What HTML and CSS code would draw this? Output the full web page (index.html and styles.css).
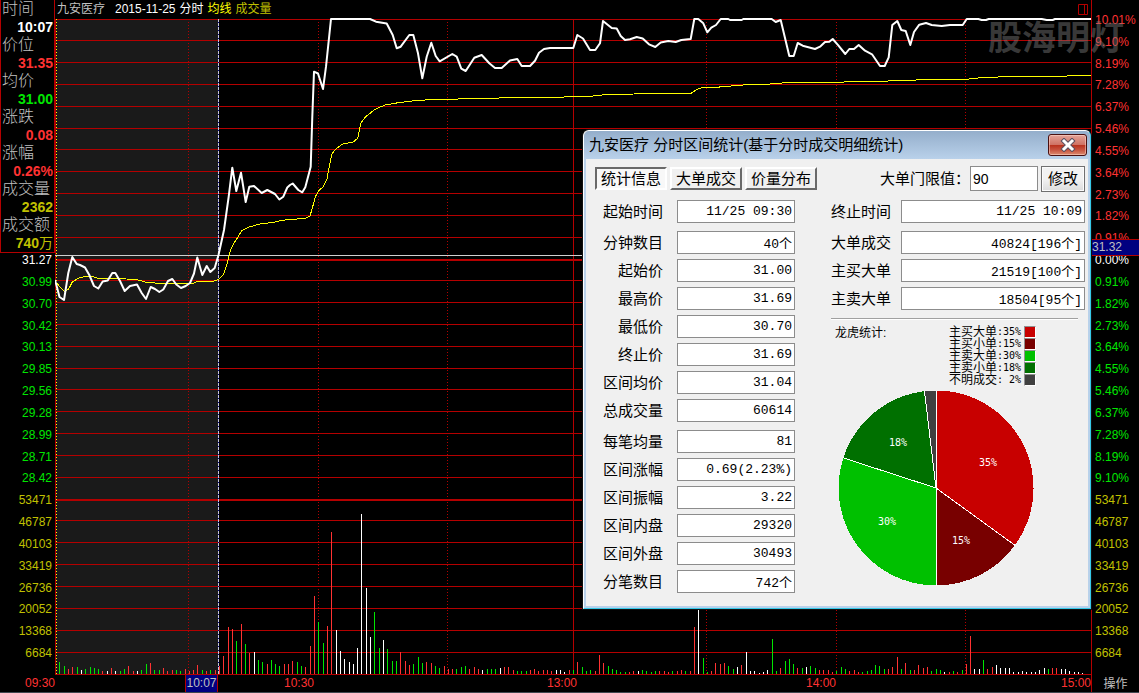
FILE: index.html
```html
<!DOCTYPE html>
<html lang="zh-CN">
<head>
<meta charset="utf-8">
<title>九安医疗 分时</title>
<link rel="stylesheet" href="styles.css">
</head>
<body>
<main class="workspace">
  <aside class="left-column">
    <dl class="quote">
      <dt>时间</dt><dd class="white">10:07</dd>
      <dt>价位</dt><dd class="red">31.35</dd>
      <dt>均价</dt><dd class="green">31.00</dd>
      <dt>涨跌</dt><dd class="red">0.08</dd>
      <dt>涨幅</dt><dd class="red">0.26%</dd>
      <dt>成交量</dt><dd class="yellow">2362</dd>
      <dt>成交额</dt><dd class="yellow">740<span class="unit">万</span></dd>
    </dl>
    <div class="axis axis-left">
      <span class="white">31.27</span>
      <span class="green">30.99</span><span class="green">30.70</span><span class="green">30.42</span><span class="green">30.13</span><span class="green">29.85</span><span class="green">29.56</span><span class="green">29.28</span><span class="green">28.99</span><span class="green">28.71</span><span class="green">28.42</span>
      <span class="yellow">53471</span><span class="yellow">46787</span><span class="yellow">40103</span><span class="yellow">33419</span><span class="yellow">26736</span><span class="yellow">20052</span><span class="yellow">13368</span><span class="yellow">6684</span>
    </div>
  </aside>

  <section class="chart">
    <header class="chart-header">
      <span class="stock">九安医疗</span>
      <span class="white">2015-11-25</span>
      <span class="white">分时</span>
      <span class="bright">均线</span>
      <span class="yellow">成交量</span>
      <svg class="pane-icon" width="10" height="11" viewBox="0 0 10 11"><path d="M.5 .5h9v10h-9zM6.5 .5v10"/></svg>
    </header>
    <svg class="plot" viewBox="55 18 1036 657" preserveAspectRatio="none">
      <rect class="shade" x="56" y="20" width="162" height="654"/>
      <path class="grid" d="M55 19.5H1091M55 40.5H1091M55 62.5H1091M55 84.5H1091M55 106.5H1091M55 128.5H1091M55 149.5H1091M55 171.5H1091M55 193.5H1091M55 215.5H1091M55 237.5H1091M55 280.5H1091M55 302.5H1091M55 324.5H1091M55 346.5H1091M55 368.5H1091M55 389.5H1091M55 411.5H1091M55 433.5H1091M55 455.5H1091M55 477.5H1091M55 520.5H1091M55 542.5H1091M55 564.5H1091M55 586.5H1091M55 608.5H1091M55 630.5H1091M55 652.5H1091M55 674.5H1091M573.5 19V674M55.5 19V674"/>
      <path class="grid thick" d="M55 260H1091M55 500H1091"/>
      <path class="grid dots" d="M188.5 22V674M318.5 22V674M447.5 22V674M706.5 22V674M836.5 22V674M965.5 22V674"/>
      <path class="range-start" d="M56.5 19V674"/>
      <path class="bar-red" d="M68.5 674v-5M72.5 674v-7M102.5 674v-3M111.5 674v-6M128.5 674v-8M133.5 674v-3M150.5 674v-11M163.5 674v-6M167.5 674v-3M172.5 674v-4M185.5 674v-5M189.5 674v-3M193.5 674v-4M197.5 674v-9M206.5 674v-3M215.5 674v-4M219.5 674v-8M223.5 674v-18M228.5 674v-47M232.5 674v-45M241.5 674v-50M249.5 674v-21M267.5 674v-10M284.5 674v-10M288.5 674v-10M292.5 674v-13M305.5 674v-7M310.5 674v-28M314.5 674v-78M327.5 674v-48M331.5 674v-142M400.5 674v-22M405.5 674v-13M409.5 674v-9M426.5 674v-12M431.5 674v-11M444.5 674v-8M448.5 674v-5M452.5 674v-5M469.5 674v-5M474.5 674v-7M478.5 674v-5M504.5 674v-7M508.5 674v-7M513.5 674v-4M530.5 674v-4M534.5 674v-5M538.5 674v-3M543.5 674v-4M547.5 674v-4M551.5 674v-3M569.5 674v-4M577.5 674v-12M595.5 674v-3M599.5 674v-19M603.5 674v-11M629.5 674v-2M633.5 674v-3M659.5 674v-3M664.5 674v-3M668.5 674v-2M677.5 674v-3M681.5 674v-4M690.5 674v-3M694.5 674v-47M711.5 674v-3M715.5 674v-11M720.5 674v-10M724.5 674v-11M741.5 674v-9M780.5 674v-6M797.5 674v-6M819.5 674v-4M823.5 674v-4M828.5 674v-4M832.5 674v-2M849.5 674v-3M854.5 674v-4M858.5 674v-2M888.5 674v-5M892.5 674v-7M897.5 674v-17M905.5 674v-11M914.5 674v-4M918.5 674v-9M923.5 674v-6M927.5 674v-7M949.5 674v-2M957.5 674v-2M966.5 674v-10M970.5 674v-38M987.5 674v-5M992.5 674v-7M1052.5 674v-6M1056.5 674v-6"/>
      <path class="bar-green" d="M59.5 674v-12M64.5 674v-8M77.5 674v-7M85.5 674v-5M90.5 674v-7M94.5 674v-6M98.5 674v-5M120.5 674v-3M124.5 674v-5M141.5 674v-4M146.5 674v-10M154.5 674v-4M159.5 674v-4M176.5 674v-4M180.5 674v-3M202.5 674v-4M210.5 674v-4M236.5 674v-33M245.5 674v-30M258.5 674v-14M262.5 674v-12M271.5 674v-14M275.5 674v-10M279.5 674v-8M297.5 674v-12M301.5 674v-8M318.5 674v-52M323.5 674v-31M374.5 674v-62M379.5 674v-26M387.5 674v-25M392.5 674v-13M396.5 674v-13M413.5 674v-10M418.5 674v-17M422.5 674v-11M435.5 674v-8M439.5 674v-6M456.5 674v-5M461.5 674v-7M465.5 674v-8M487.5 674v-5M491.5 674v-5M495.5 674v-5M517.5 674v-3M521.5 674v-3M526.5 674v-3M573.5 674v-4M582.5 674v-7M586.5 674v-3M590.5 674v-4M608.5 674v-8M612.5 674v-5M616.5 674v-4M620.5 674v-2M625.5 674v-2M642.5 674v-4M646.5 674v-3M651.5 674v-2M655.5 674v-3M672.5 674v-3M685.5 674v-3M703.5 674v-16M707.5 674v-2M728.5 674v-8M733.5 674v-5M772.5 674v-35M776.5 674v-3M785.5 674v-13M789.5 674v-15M793.5 674v-10M802.5 674v-6M810.5 674v-8M815.5 674v-6M836.5 674v-3M841.5 674v-7M845.5 674v-5M862.5 674v-2M867.5 674v-3M871.5 674v-4M875.5 674v-9M879.5 674v-8M884.5 674v-5M901.5 674v-5M910.5 674v-4M931.5 674v-3M936.5 674v-5M940.5 674v-4M953.5 674v-3M962.5 674v-4M983.5 674v-14M1048.5 674v-5"/>
      <path class="bar-white" d="M81.5 674v-4M107.5 674v-3M115.5 674v-3M137.5 674v-3M254.5 674v-22M336.5 674v-44M340.5 674v-23M344.5 674v-15M349.5 674v-12M353.5 674v-10M357.5 674v-26M361.5 674v-160M366.5 674v-86M370.5 674v-37M383.5 674v-34M482.5 674v-4M500.5 674v-6M556.5 674v-4M560.5 674v-4M564.5 674v-2M638.5 674v-3M698.5 674v-64M737.5 674v-7M746.5 674v-22M750.5 674v-3M754.5 674v-3M759.5 674v-1M763.5 674v-2M767.5 674v-4M806.5 674v-7M944.5 674v-2M974.5 674v-5M979.5 674v-5M996.5 674v-9M1000.5 674v-6M1005.5 674v-6M1009.5 674v-6M1013.5 674v-2M1018.5 674v-2M1022.5 674v-3M1026.5 674v-2M1031.5 674v-2M1035.5 674v-2M1039.5 674v-4M1044.5 674v-6M1061.5 674v-5M1065.5 674v-5M1069.5 674v-3M1074.5 674v-2M1078.5 674v-2M1082.5 674v-1"/>
      <path class="range-end-base" d="M218.5 19V674"/>
      <path class="range-end" d="M218.5 19V674"/>
      <path class="cross" d="M55 255.5H1091"/>
      <polyline class="average" points="57,283 59.5,286.5 64.7,291.5 68.7,289 72.3,282 79,278 85,276.5 92.3,276.5 98.3,278.5 120,278.7 136.7,279.5 146.7,282.5 162.3,283.5 193.3,283.5 196.7,281.8 212.3,281.7 218.3,279.5 223.3,275 227.7,261.7 230,252 232.3,246 237.7,237.3 241.7,230.7 248.3,227.3 258.3,224.3 273.3,222.3 282.7,220.3 290,219.5 305,218.5 310,216 312.7,206.7 315.3,196.7 319.3,190 322.7,187.3 327,178.7 329.3,166.7 331.7,154.3 336,148.7 342.7,144 353.3,142 357.7,138.3 360.7,123.3 365,117.3 375,109.3 385,105 398.3,102.7 416.7,100.5 433.3,99.5 463,98.9 506.7,97.8 556.7,97.2 590,96.3 601.7,95 640,93.8 690.7,93.5 696.7,89.5 701.7,87.6 717.3,87.2 743.3,85 770,84 787.3,82.6 838.3,82.1 880,81.4 895,80.7 925,79.7 966.7,79.3 981.7,77.6 1003.3,76.8 1058.3,76.2 1091,75.5"/>
      <polyline class="price" points="55,280 57.7,290 59.5,297 64,300 68.3,273 72.3,257 76.7,264 80,265 85,267.5 89.3,275 94,286 98.3,288.5 102.7,281.5 107.7,280.5 112.3,273 115.3,273 120,281 124.7,291 130,286 137,284.5 141.7,293 146,299 150.7,287 155,289 159.3,292 163.3,289.5 168,281 172.3,279 176.3,284.5 181,288 185.7,286 190,283 194,273.5 197.3,257.5 202.3,275 206.7,266 210.3,272 214.7,268 218.5,255 224,230 228.7,196.7 232.3,167.7 236.3,191 241,172.7 245.7,202 249.3,186.7 254,186 261.7,193 267.3,190 275,194 279.3,199.5 283.3,196.7 287.3,187.5 290,185 292.7,183.5 298.3,190 302.3,192.3 305.3,187.3 310.7,166.7 312.3,116.7 314,71.7 318,73.5 323,89 326,66.7 331,19 370,19 376,21.7 386.7,23.5 392.7,35 396.7,48.3 400.7,46.7 409.3,35 413.3,35 418,53.3 422.3,78.3 426.7,56.7 431.3,42.7 435.7,56 439.7,61.3 452.3,54 456.7,56.7 461.3,68.7 465.7,71 474.3,57.7 481.7,55 489.3,63.3 495,68 501.7,68 510,60.5 517.3,59 521.7,66 530,66 535,60.7 539,52.7 544,49 550,48 573.3,48 577.3,35 583,38.5 590,50 595.3,50 600,43.3 603,21 611.7,28 616.7,28.5 620.7,36 625,40 630,39.3 636.7,37 642.7,38.5 649,44.3 655.3,47 660.7,42.5 668.3,41 675.7,42 681.3,40 690.7,39 694.3,19 698.3,19 703.3,23.3 707.3,32.3 711.3,27.7 716,25 720.7,19 728.3,19 730,20 741.7,20 743.3,19 771.7,19 775.7,22 780.7,20 789.3,56 793.7,56 797.7,43 802.7,45.7 815,49 820,46.7 825,42 829.3,41.7 832.7,39 838.3,45.3 845.3,54 849.3,49 854,49 858.7,45 865,50.7 872,54.3 880,66 884.7,66 888.7,57.3 892.3,25 897.3,21 901.3,30 905.7,31 910.3,45 914,32 919.3,24.7 926,23 931.7,25 941.7,26 950,25 962.7,25 966.7,19 978.3,19 981.7,20 986,20 988.7,19 1041.7,19 1046.7,20 1052.7,20 1055,19 1091,19"/>
    </svg>
  </section>

  <aside class="axis axis-right">
    <span class="red">10.01%</span><span class="red">9.10%</span><span class="red">8.19%</span><span class="red">7.28%</span><span class="red">6.37%</span><span class="red">5.46%</span><span class="red">4.55%</span><span class="red">3.64%</span><span class="red">2.73%</span><span class="red">1.82%</span><span class="red">0.91%</span>
    <span class="white">0.00%</span>
    <span class="green">0.91%</span><span class="green">1.82%</span><span class="green">2.73%</span><span class="green">3.64%</span><span class="green">4.55%</span><span class="green">5.46%</span><span class="green">6.37%</span><span class="green">7.28%</span><span class="green">8.19%</span><span class="green">9.10%</span>
    <span class="yellow">53471</span><span class="yellow">46787</span><span class="yellow">40103</span><span class="yellow">33419</span><span class="yellow">26736</span><span class="yellow">20052</span><span class="yellow">13368</span><span class="yellow">6684</span>
    <div class="price-tag">31.32</div>
  </aside>

  <footer class="time-axis">
    <span>09:30</span>
    <span class="time-tag">10:07</span>
    <span>10:30</span>
    <span>13:00</span>
    <span>14:00</span>
    <span>15:00</span>
    <button class="action" type="button">操作</button>
  </footer>

  <div class="watermark">股海明灯</div>

  <section class="dialog" role="dialog" aria-labelledby="dialog-title">
    <header class="titlebar">
      <h1 id="dialog-title">九安医疗 分时区间统计(基于分时成交明细统计)</h1>
      <button class="close" type="button" aria-label="关闭">
        <svg width="16" height="14" viewBox="0 0 16 14"><path class="x-edge" d="M4 3l8 8M12 3l-8 8"/><path class="x-fill" d="M4 3l8 8M12 3l-8 8"/></svg>
      </button>
    </header>
    <div class="dialog-body">
      <div class="toolbar">
        <button class="tab active" type="button">统计信息</button>
        <button class="tab" type="button">大单成交</button>
        <button class="tab" type="button">价量分布</button>
        <label class="limit-label" for="limit">大单门限值：</label>
        <input class="limit" id="limit" type="text" value="90">
        <button class="modify" type="button">修改</button>
      </div>
      <div class="columns">
        <div class="stats">
          <div class="group">
            <label for="s1">起始时间</label><input id="s1" readonly value="11/25 09:30">
          </div>
          <div class="group">
            <label for="s2">分钟数目</label><input id="s2" readonly value="40个">
            <label for="s3">起始价</label><input id="s3" readonly value="31.00">
            <label for="s4">最高价</label><input id="s4" readonly value="31.69">
            <label for="s5">最低价</label><input id="s5" readonly value="30.70">
            <label for="s6">终止价</label><input id="s6" readonly value="31.69">
            <label for="s7">区间均价</label><input id="s7" readonly value="31.04">
            <label for="s8">总成交量</label><input id="s8" readonly value="60614">
          </div>
          <div class="group">
            <label for="s9">每笔均量</label><input id="s9" readonly value="81">
            <label for="s10">区间涨幅</label><input id="s10" readonly value="0.69(2.23%)">
            <label for="s11">区间振幅</label><input id="s11" readonly value="3.22">
            <label for="s12">区间内盘</label><input id="s12" readonly value="29320">
            <label for="s13">区间外盘</label><input id="s13" readonly value="30493">
            <label for="s14">分笔数目</label><input id="s14" readonly value="742个">
          </div>
        </div>
        <div class="stats wide">
          <div class="group">
            <label for="r1">终止时间</label><input id="r1" readonly value="11/25 10:09">
          </div>
          <div class="group">
            <label for="r2">大单成交</label><input id="r2" readonly value="40824[196个]">
            <label for="r3">主买大单</label><input id="r3" readonly value="21519[100个]">
            <label for="r4">主卖大单</label><input id="r4" readonly value="18504[95个]">
          </div>
          <div class="breakdown">
            <div class="breakdown-head">
              <h2>龙虎统计:</h2>
              <ul class="legend">
                <li>主买大单<span class="num">:35%</span><i class="swatch c1"></i></li>
                <li>主买小单<span class="num">:15%</span><i class="swatch c2"></i></li>
                <li>主卖大单<span class="num">:30%</span><i class="swatch c3"></i></li>
                <li>主卖小单<span class="num">:18%</span><i class="swatch c4"></i></li>
                <li>不明成交<span class="num">: 2%</span><i class="swatch c5"></i></li>
              </ul>
            </div>
            <svg class="pie" width="196" height="196" viewBox="0 0 196 196">
              <g shape-rendering="crispEdges">
                <path class="p1" d="M98 98V.5A97.5 97.5 0 0 1 176.900 155.300Z"/>
                <path class="p2" d="M98 98L176.900 155.300A97.5 97.5 0 0 1 98 195.500Z"/>
                <path class="p3" d="M98 98V195.500A97.5 97.5 0 0 1 5.300 67.900Z"/>
                <path class="p4" d="M98 98L5.300 67.900A97.5 97.5 0 0 1 86.500 1.200Z"/>
                <path class="p5" d="M98 98L86.500 1.200A97.5 97.5 0 0 1 98 .5Z"/>
                <path class="pie-lines" d="M98.500 .5V195.500M98 98L176.900 155.300M98 98L5.300 67.900M98 98L86.500 1.200"/>
              </g>
              <text x="150" y="76">35%</text>
              <text x="123" y="154">15%</text>
              <text x="49" y="135">30%</text>
              <text x="60" y="56">18%</text>
            </svg>
          </div>
        </div>
      </div>
    </div>
  </section>
</main>
</body>
</html>
```

FILE: styles.css
```css
* { box-sizing: border-box; }

body {
  margin: 0;
  background: #000;
  font: 12px/14px "Liberation Sans", "Noto Sans CJK SC", sans-serif;
}

.red { color: #ff3232; }
.green { color: #00e600; }
.yellow { color: #c0c000; }
.bright { color: #ffff00; }
.white { color: #fff; }

.workspace {
  position: relative;
  display: grid;
  grid-template: minmax(0, 1fr) 18px / 55px minmax(0, 1fr) 48px;
  height: 100vh;
  min-height: 640px;
  overflow: hidden;
}

/* Quote panel and left scale */
.left-column { display: flex; flex-direction: column; }

.quote {
  margin: 0;
  border: 1px solid #b40000;
  border-top: 0;
}

.quote dt, .quote dd {
  margin: 0;
  height: 18px;
  line-height: 18px;
  white-space: nowrap;
}

.quote dt { padding-left: 1px; color: #c0c0c0; font-size: 16px; font-weight: 300; }
.quote dd { padding-right: 1px; text-align: right; font-size: 14px; font-weight: bold; }
.quote .unit { font-weight: 400; }

.axis { display: grid; grid-auto-rows: 1fr; }

.axis-left {
  flex: 1;
  padding: 0 3px 7px 0;
  text-align: right;
}

.axis-right {
  position: relative;
  align-items: center;
  padding: 9px 0 11px 3px;
  border-left: 1px solid #b40000;
}

.price-tag {
  position: absolute;
  top: 239px;
  left: 0;
  right: 0;
  height: 17px;
  border: solid #b40000;
  border-width: 1px 0;
  background: #000080;
  color: #c0c0c0;
  line-height: 15px;
}

/* Chart */
.chart { display: flex; flex-direction: column; min-width: 0; }

.chart-header {
  display: flex;
  align-items: center;
  gap: 4px;
  height: 18px;
  padding: 0 3px 0 2px;
}

.stock { margin-right: 6px; color: #c0c0c0; }
.pane-icon { margin-left: auto; fill: none; stroke: #b40000; }

.plot { display: block; flex: 1; width: 100%; min-height: 0; }
.plot path { fill: none; shape-rendering: crispEdges; }
.plot polyline { fill: none; stroke-linejoin: round; }
.shade { fill: #1a1a1a; }
.grid { stroke: #b40000; }
.thick { stroke-width: 2; }
.dots { stroke-dasharray: 1 2; }
.range-start { stroke: #ffff00; stroke-dasharray: 1 2; }
.range-end-base { stroke: #000080; }
.range-end { stroke: #c8c8d8; stroke-dasharray: 3 1; }
.cross { stroke: #d0d0d0; }
.bar-red { stroke: #ff3232; }
.bar-green { stroke: #00e600; }
.bar-white { stroke: #fff; }
.average { stroke: #ffff00; shape-rendering: crispEdges; }
.price { stroke: #fff; stroke-width: 2; }

.time-axis {
  grid-column: 1 / -1;
  display: grid;
  grid-template-columns: 55px 163fr 96fr 263fr 259fr 255fr 48px;
  border-bottom: 1px solid #404850;
  color: #ff3232;
  line-height: 16px;
  text-align: right;
}

.time-axis .time-tag {
  justify-self: end;
  width: 33px;
  border: solid #b40000;
  border-width: 0 1px;
  background: #000080;
  color: #c0c0c0;
  text-align: center;
}

.action {
  margin: 0;
  padding: 0;
  border: 0;
  border-left: 1px solid #b40000;
  background: none;
  color: #c0c0c0;
  font: inherit;
}

.watermark {
  position: absolute;
  top: 14px;
  right: 15px;
  color: rgba(128, 128, 128, .45);
  font: bold 34px/44px "Noto Sans CJK SC", sans-serif;
  pointer-events: none;
}

/* Statistics window */
.dialog {
  position: absolute;
  top: 130px;
  right: 48px;
  width: 508px;
  border: 1px solid #35c8e8;
  border-top-color: #fff;
  border-left-color: #fff;
  border-radius: 6px 6px 0 0;
  background: #f0f0f0;
  box-shadow: 0 0 0 1px #101010;
  color: #000;
  font-size: 15px;
  overflow: hidden;
}

.titlebar {
  display: flex;
  align-items: center;
  justify-content: space-between;
  height: 28px;
  padding: 0 3px 0 5px;
  background: linear-gradient(#94aecb, #b9d1ea);
}

.titlebar h1 { margin: 0; font-size: 15px; font-weight: 400; line-height: 20px; white-space: nowrap; }

.close {
  display: grid;
  place-items: center;
  width: 39px;
  height: 22px;
  padding: 0;
  border: 1px solid #4a1010;
  border-radius: 3px;
  background: linear-gradient(#e4a398, #cf7365 48%, #b8301c 50%, #c85440 75%, #dc8c70);
  box-shadow: inset 0 0 0 1px rgba(255, 220, 210, .5);
}

.x-edge, .x-fill { fill: none; stroke-linecap: square; }
.x-edge { stroke: #5c5060; stroke-width: 5; }
.x-fill { stroke: #fff; stroke-width: 3; }

.dialog-body {
  padding: 6px 3px 13px 9px;
  border: solid #b9d1ea;
  border-width: 0 2px 2px;
}

.toolbar { display: flex; align-items: center; gap: 3px; height: 27px; margin-bottom: 8px; }

.tab, .modify {
  padding: 0;
  border: 2px solid;
  border-color: #fff #696969 #696969 #fff;
  background: #f0f0f0;
  color: #000;
  font: inherit;
}

.tab { width: 72px; height: 23px; line-height: 18px; }
.tab.active { border-color: #696969 #fff #fff #696969; background: #f8f8f8; }
.limit-label { margin-left: auto; margin-right: -3px; line-height: 20px; }

.limit {
  width: 68px;
  height: 25px;
  padding: 0 2px;
  border: 1px solid #8c8c8c;
  background: #fff;
  font: 14px/20px "Liberation Sans", "Noto Sans CJK SC", sans-serif;
}

.modify {
  width: 44px;
  height: 26px;
  border: 1px solid #707070;
  background: linear-gradient(#f2f2f2 50%, #dcdcdc);
  box-shadow: inset 0 0 0 1px #fcfcfc;
}

.columns { display: flex; gap: 36px; }
.stats { display: flex; flex-direction: column; gap: 8px; width: 200px; }

.group {
  display: grid;
  grid-template-columns: 68px 1fr;
  grid-auto-rows: 23px;
  gap: 5px 14px;
  align-items: center;
}

.group label { text-align: right; line-height: 20px; }

.group input {
  width: 100%;
  height: 23px;
  padding: 0 2px;
  border: 1px solid #8c8c8c;
  background: #fff;
  font: 13px/20px "Liberation Mono", "Noto Sans CJK SC", monospace;
  text-align: right;
}

.wide { flex: 1; }
.wide .group { grid-template-columns: 60px 1fr; column-gap: 10px; }

.breakdown {
  margin-right: 7px;
  border-top: 1px solid #a0a0a0;
  box-shadow: inset 0 1px #fff;
}

.breakdown-head {
  display: flex;
  justify-content: space-between;
  padding: 7px 42px 4px 4px;
  font-size: 12px;
}

.breakdown h2 { margin: 0; font-size: 12px; font-weight: 400; }
.legend { margin: 0; padding: 0; list-style: none; }
.legend li { display: flex; align-items: center; height: 12px; line-height: 12px; }
.num { font: 10px/12px "DejaVu Sans Mono", monospace; white-space: pre; }

.swatch {
  width: 12px;
  height: 12px;
  margin-left: 3px;
  border: 1px solid;
  border-color: #909090 #fff #fff #909090;
}

.c1 { background: #c80000; }
.c2 { background: #780000; }
.c3 { background: #00c000; }
.c4 { background: #007000; }
.c5 { background: #404040; }

.pie { display: block; margin-left: 7px; }
.p1 { fill: #c80000; }
.p2 { fill: #780000; }
.p3 { fill: #00c000; }
.p4 { fill: #007000; }
.p5 { fill: #404040; }
.pie-lines { fill: none; stroke: #fff; }
.pie text { fill: #fff; font: 10px "DejaVu Sans Mono", monospace; text-anchor: middle; }
```
